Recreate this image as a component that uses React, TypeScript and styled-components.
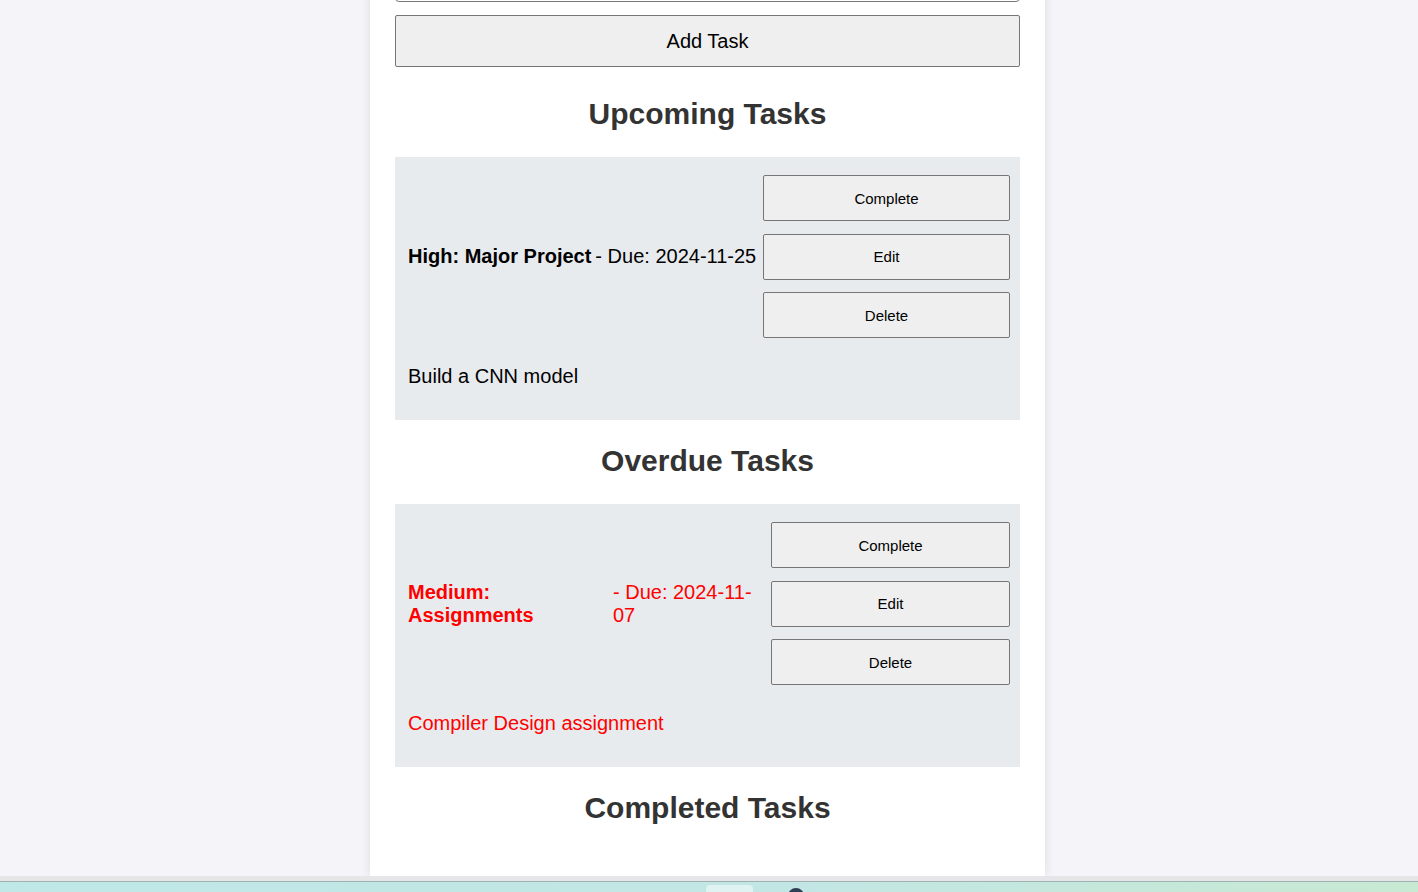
import React from 'react';
import styled, {createGlobalStyle} from "styled-components";

type TaskType = {
    title: string;
    priority: string;
    due: string;
    description: string;
    overdue?: boolean;
}

const upcoming: TaskType[] = [
    {title: "Major Project", priority: "High", due: "2024-11-25", description: "Build a CNN model"},
]
const overdue: TaskType[] = [
    {title: "Assignments", priority: "Medium", due: "2024-11-07", description: "Compiler Design assignment", overdue: true},
]

const GlobalStyle = createGlobalStyle`
  html, body {
    margin: 0;
    padding: 0;
    overflow: hidden;
  }
  body {
    font-family: "Liberation Sans", Arial, sans-serif;
    background-color: #f4f4f9;
  }
`

type TaskItemProps = {
    task: TaskType;
    buttonsWidth: number;
}
const TaskItem = (props: TaskItemProps) => {
    const {task} = props;
    return (
        <StyledTask overdue={task.overdue}>
            <TaskRow>
                <TaskInfo>
                    <TaskName>{task.priority}: {task.title}</TaskName>
                    <TaskDue>- Due: {task.due}</TaskDue>
                </TaskInfo>
                <TaskButtons width={props.buttonsWidth}>
                    <SmallButton>Complete</SmallButton>
                    <SmallButton>Edit</SmallButton>
                    <SmallButton>Delete</SmallButton>
                </TaskButtons>
            </TaskRow>
            <TaskDescription>{task.description}</TaskDescription>
        </StyledTask>
    );
};

export default function App() {
    return (
        <>
            <GlobalStyle/>
            <Viewport>
                <Container>
                    <Title>Task Manager</Title>
                    <TaskForm>
                        <Field type="text" placeholder="Task Title"/>
                        <FieldArea placeholder="Task Description"/>
                        <Field type="date"/>
                        <Select defaultValue="Low">
                            <option>Low</option>
                            <option>Medium</option>
                            <option>High</option>
                        </Select>
                        <AddButton type="button">Add Task</AddButton>
                    </TaskForm>
                    <SectionTitle>Upcoming Tasks</SectionTitle>
                    {upcoming.map((t, i) => <TaskItem key={i} task={t} buttonsWidth={247}/>)}
                    <SectionTitle>Overdue Tasks</SectionTitle>
                    {overdue.map((t, i) => <TaskItem key={i} task={t} buttonsWidth={239}/>)}
                    <SectionTitle>Completed Tasks</SectionTitle>
                </Container>
            </Viewport>
            <Taskbar>
                <TaskbarTab/>
                <TaskbarDot/>
            </Taskbar>
        </>
    );
}

const Viewport = styled.div`
  height: 876px;
  overflow: hidden;
  display: flex;
  flex-direction: column;
  justify-content: flex-end;
  align-items: center;
  padding-right: 3px;
`
const Container = styled.div`
  width: 625px;
  flex-shrink: 0;
  padding: 25px;
  background-color: #ffffff;
  box-shadow: 0 0 10px rgba(0, 0, 0, 0.1);
`
const Title = styled.h1`
  margin: 0 0 20px;
  text-align: center;
  color: #333;
  font-size: 32px;
`
const TaskForm = styled.form`
  display: flex;
  flex-direction: column;
  gap: 13px;
  margin-bottom: 29px;
`
const Field = styled.input`
  box-sizing: border-box;
  width: 100%;
  height: 44px;
  padding: 10px;
  font-size: 16px;
  font-family: inherit;
  border: 1px solid #767676;
  border-radius: 4px;
`
const FieldArea = styled.textarea`
  box-sizing: border-box;
  width: 100%;
  height: 80px;
  padding: 10px;
  font-size: 16px;
  font-family: inherit;
  border: 1px solid #767676;
  border-radius: 4px;
`
const Select = styled.select`
  box-sizing: border-box;
  width: 100%;
  height: 44px;
  padding: 10px;
  font-size: 16px;
  font-family: inherit;
  border: 1px solid #767676;
  border-radius: 4px;
  background: #fff;
`
const AddButton = styled.button`
  height: 52px;
  width: 100%;
  font-family: "Liberation Sans", Arial, sans-serif;
  font-size: 20px;
  color: #000;
  background-color: #efefef;
  border: 1px solid #767676;
  border-radius: 2px;
`
const SectionTitle = styled.h2`
  margin: 23px 0 25px;
  text-align: center;
  color: #333;
  font-size: 30px;
  line-height: 36px;
  font-weight: 700;
`
const StyledTask = styled.div<{ overdue?: boolean }>`
  background-color: #e8ebee;
  padding: 18px 10px 32px 13px;
  color: ${props => props.overdue ? "#ff0000" : "#000000"};
  font-size: 20px;
  line-height: 23px;
`
const TaskRow = styled.div`
  display: flex;
  align-items: center;
  gap: 6px;
`
const TaskInfo = styled.div`
  flex: 1;
  min-width: 0;
  display: flex;
`
const TaskName = styled.strong`
  margin-right: 4px;
`
const TaskDue = styled.span`
`
const TaskButtons = styled.div<{ width: number }>`
  flex: 0 0 ${props => props.width}px;
  display: flex;
  flex-direction: column;
  gap: 12.5px;
`
const SmallButton = styled.button`
  height: 46px;
  width: 100%;
  font-family: "Liberation Sans", Arial, sans-serif;
  font-size: 15px;
  color: #000;
  background-color: #efefef;
  border: 1px solid #767676;
  border-radius: 2px;
`
const TaskDescription = styled.p`
  margin: 27px 0 0;
`
const Taskbar = styled.div`
  position: relative;
  height: 16px;
  box-sizing: border-box;
  border-top: 5px solid #e6e6e9;
  background: linear-gradient(90deg, #bfe8e6 0%, #c2e6e4 55%, #c8e9d2 100%);
  box-shadow: inset 0 1px 0 #9eb2b2;
  overflow: hidden;
`
const TaskbarTab = styled.div`
  position: absolute;
  left: 706px;
  top: 4px;
  width: 47px;
  height: 12px;
  border-radius: 4px;
  background-color: #def3f2;
`
const TaskbarDot = styled.div`
  position: absolute;
  left: 788px;
  top: 7px;
  width: 16px;
  height: 16px;
  border-radius: 50%;
  background-color: #2f3f55;
`
